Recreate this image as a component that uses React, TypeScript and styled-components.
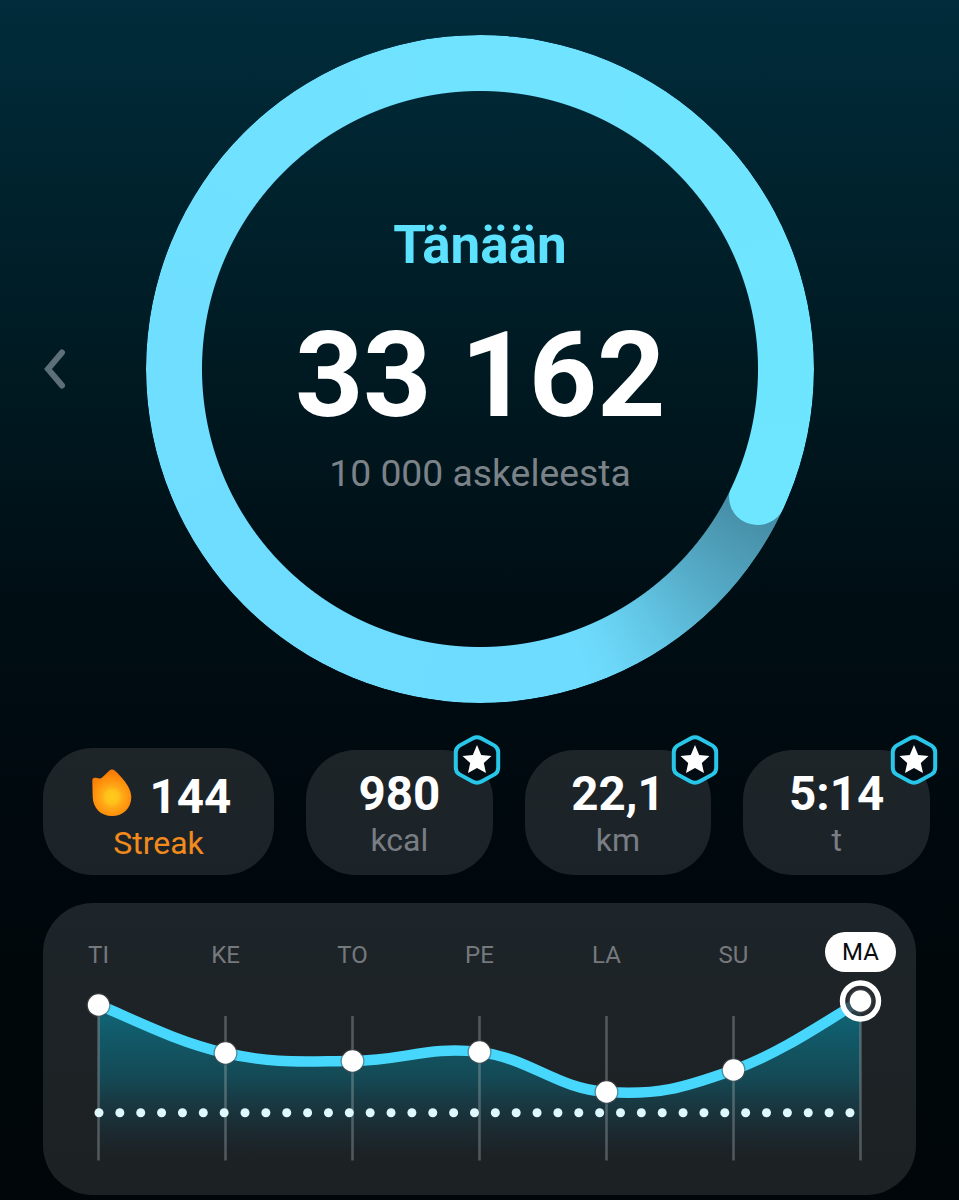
import React from 'react';
import styled, { createGlobalStyle } from 'styled-components';

const GlobalStyle = createGlobalStyle`
  * { box-sizing: border-box; }
  body { margin: 0; background: #000608; }
`;

const Page = styled.main`
  display: flex;
  flex-direction: column;
  width: 959px;
  height: 1200px;
  overflow: hidden;
  font-family: Roboto, 'Liberation Sans', sans-serif;
  background: linear-gradient(#012c3b 0, #00222d 200px, #001820 400px, #000e14 600px, #00090e 800px, #00070b 1000px, #000609 1200px);
`;

const Hero = styled.section`
  display: flex;
  align-items: flex-start;
  height: 713px;
  margin-top: 35px;
  padding-left: 41px;
`;

const PrevButton = styled.button`
  display: flex;
  width: 28px;
  height: 48px;
  margin: 310px 77px 0 0;
  padding: 0;
  border: 0;
  background: none;
`;

const Goal = styled.div`
  position: relative;
  display: flex;
  flex-direction: column;
  align-items: center;
  width: 668px;
  height: 668px;
  padding-top: 180px;
`;

const Ring = styled.div`
  position: absolute;
  inset: 0;
  border-radius: 50%;
  overflow: hidden;
  background: conic-gradient(from 114.85deg, #4189a1 0deg, #4993ac 6deg, #56adc9 20deg, #62c6e5 31.5deg, #6cd7f8 41deg, #6edcff 46deg, #6fddff 130deg, #70e2ff 220deg, #6ee6ff 360deg);
  mask: radial-gradient(circle, transparent 277.5px, #000 278.5px);
`;

const RingCap = styled.div`
  position: absolute;
  left: 583.3px;
  top: 434px;
  width: 56.4px;
  height: 56.4px;
  border-radius: 50%;
  background: #6ee6ff;
`;

const Today = styled.div`
  font-size: 53px;
  line-height: 60px;
  font-weight: 700;
  color: #5ce1fe;
`;

const Steps = styled.div`
  margin-top: 40px;
  font-size: 119.5px;
  line-height: 120px;
  font-weight: 700;
  letter-spacing: -0.4px;
  color: #fff;
`;

const Target = styled.div`
  margin-top: 16px;
  font-size: 37.3px;
  line-height: 44px;
  color: #7b8288;
`;

const Stats = styled.section`
  display: flex;
  align-items: flex-end;
  gap: 32px;
  height: 127px;
  margin: 0 29px 0 43px;
`;

const Card = styled.article<{ $streak?: boolean }>`
  position: relative;
  display: flex;
  flex-direction: column;
  align-items: center;
  flex: ${(p) => (p.$streak ? '0 0 231px' : '1 1 0')};
  height: ${(p) => (p.$streak ? 127 : 125)}px;
  padding-top: ${(p) => (p.$streak ? 24 : 19)}px;
  border-radius: 50px;
  background: linear-gradient(#1e2529, #1c2328);
`;

const ValueRow = styled.div`
  display: flex;
  gap: 18px;
  padding-left: 6px;
`;

const Value = styled.div`
  font-size: 47.5px;
  line-height: 50px;
  font-weight: 700;
  color: #fff;
`;

const Unit = styled.div<{ $accent?: boolean }>`
  margin-top: 1px;
  font-size: 32px;
  line-height: 40px;
  color: ${(p) => (p.$accent ? '#f28a1c' : '#797d84')};
`;

const FlameSlot = styled.div`
  width: 40px;
  height: 48px;
  margin-top: -3px;
`;

const Badge = styled.svg`
  position: absolute;
  top: -16px;
  right: -9px;
`;

const Week = styled.section`
  flex: none;
  width: 873px;
  height: 292px;
  margin: 28px 0 0 43px;
  padding-top: 28px;
  border-radius: 50px;
  background: linear-gradient(#1d252b, #1d2326 30%, #1c2124);
`;

const Days = styled.div`
  display: grid;
  grid-template-columns: repeat(7, 127px);
  justify-items: center;
  width: 889px;
  height: 39px;
  margin-left: -8px;
`;

const Day = styled.div<{ $active?: boolean }>`
  width: ${(p) => (p.$active ? '71px' : 'auto')};
  height: 40px;
  margin-top: ${(p) => (p.$active ? 0.5 : 4)}px;
  border-radius: 20px;
  background: ${(p) => (p.$active ? '#fff' : 'none')};
  color: ${(p) => (p.$active ? '#0a0c0e' : '#75797d')};
  font-size: 24px;
  line-height: 40px;
  text-align: center;
`;

const Plot = styled.svg`
  display: block;
`;

const days = ['TI', 'KE', 'TO', 'PE', 'LA', 'SU', 'MA'];
const levels = [35, 83, 91, 82, 122, 100, 31];
const points = levels.map((y, i) => ({ x: 55.5 + i * 127, y }));

const stats = [
  { value: '980', unit: 'kcal' },
  { value: '22,1', unit: 'km' },
  { value: '5:14', unit: 't' },
];

const curve = points.reduce((d, p, i) => {
  if (i === 0) return `M${p.x} ${p.y}`;
  const a = points[i - 1];
  const before = points[Math.max(0, i - 2)];
  const after = points[Math.min(points.length - 1, i + 1)];
  const k = 0.2;
  return `${d} C${a.x + (p.x - before.x) * k} ${a.y + (p.y - before.y) * k} ${p.x - (after.x - a.x) * k} ${p.y - (after.y - a.y) * k} ${p.x} ${p.y}`;
}, '');

function StarBadge() {
  return (
    <Badge width="50" height="52" viewBox="-25 -26 50 52">
      <path
        d="M-4.5 -21.6 Q0 -24 4.5 -21.6 L17.5 -14.4 Q21.2 -12 21.2 -8 V8 Q21.2 12 17.5 14.4 L4.5 21.6 Q0 24 -4.5 21.6 L-17.5 14.4 Q-21.2 12 -21.2 8 V-8 Q-21.2 -12 -17.5 -14.4 Z"
        fill="#030c12"
        stroke="#28c6e9"
        strokeWidth="4"
      />
      <path
        d="M0 -15 L4.2 -5 L14.5 -4 L6.8 3.1 L9 13 L0 8 L-9 13 L-6.8 3.1 L-14.5 -4 L-4.2 -5 Z"
        fill="#fff"
      />
    </Badge>
  );
}

function Flame() {
  return (
    <svg width="40" height="48" viewBox="0 0 40 48">
      <defs>
        <radialGradient id="flame" cx="20" cy="28" r="25" gradientUnits="userSpaceOnUse">
          <stop offset="0" stopColor="#ffcb1c" />
          <stop offset="0.28" stopColor="#ffc01b" />
          <stop offset="0.4" stopColor="#ffab17" />
          <stop offset="0.7" stopColor="#ff920d" />
          <stop offset="1" stopColor="#f97b08" />
        </radialGradient>
      </defs>
      <path
        d="M0.3 12 C0.1 9.5 1.5 8.3 4 8.8 L7.2 9.4 Q9 9.6 10.4 8.2 L17.2 1.7 Q20 -0.8 22.7 1.6 C28 6.5 39.3 17.5 39.3 28 C39.3 39.5 31 47 20 47 C8.7 47 1 39 0.7 28 Z"
        fill="url(#flame)"
      />
    </svg>
  );
}

function WeekPlot() {
  const last = points[points.length - 1];
  return (
    <Plot width="873" height="200" viewBox="0 0 873 200">
      <defs>
        <linearGradient id="area" x1="0" y1="31" x2="0" y2="187" gradientUnits="userSpaceOnUse">
          <stop offset="0" stopColor="#0e6d80" stopOpacity="0.95" />
          <stop offset="0.5" stopColor="#115867" stopOpacity="0.72" />
          <stop offset="1" stopColor="#1b3d50" stopOpacity="0" />
        </linearGradient>
      </defs>
      <path d={`${curve} V190 H55.5 Z`} fill="url(#area)" />
      {points.map((p) => (
        <path key={p.x} d={`M${p.x} 46 V190.5`} stroke="#a8afb3" strokeOpacity="0.38" strokeWidth="2.6" />
      ))}
      <path d={curve} fill="none" stroke="#48d7fc" strokeWidth="10.5" />
      {Array.from({ length: 37 }, (_, i) => (
        <circle key={i} cx={56 + i * 20.86} cy="142.7" r="4.5" fill="#dff8fd" />
      ))}
      <circle cx={last.x} cy={last.y} r="18" fill="#2d3034" fillOpacity="0.75" stroke="#fff" strokeWidth="5.4" />
      {points.map((p) => (
        <g key={p.x}>
          <circle cx={p.x} cy={p.y} r="12" fill="#4a4f54" fillOpacity="0.55" />
          <circle cx={p.x} cy={p.y} r="10.7" fill="#fff" />
        </g>
      ))}
    </Plot>
  );
}

export default function App() {
  return (
    <Page>
      <GlobalStyle />
      <Hero>
        <PrevButton>
          <svg width="28" height="48" viewBox="0 0 28 48" fill="none">
            <path d="M21 7.5 L7 24 L21 40.5" stroke="#5d6f78" strokeWidth="6" strokeLinecap="round" />
          </svg>
        </PrevButton>
        <Goal>
          <Ring>
            <RingCap />
          </Ring>
          <Today>Tänään</Today>
          <Steps>33 162</Steps>
          <Target>10 000 askeleesta</Target>
        </Goal>
      </Hero>
      <Stats>
        <Card $streak>
          <ValueRow>
            <FlameSlot>
              <Flame />
            </FlameSlot>
            <Value>144</Value>
          </ValueRow>
          <Unit $accent>Streak</Unit>
        </Card>
        {stats.map((s) => (
          <Card key={s.unit}>
            <Value>{s.value}</Value>
            <Unit>{s.unit}</Unit>
            <StarBadge />
          </Card>
        ))}
      </Stats>
      <Week>
        <Days>
          {days.map((d) => (
            <Day key={d} $active={d === 'MA'}>
              {d}
            </Day>
          ))}
        </Days>
        <WeekPlot />
      </Week>
    </Page>
  );
}
